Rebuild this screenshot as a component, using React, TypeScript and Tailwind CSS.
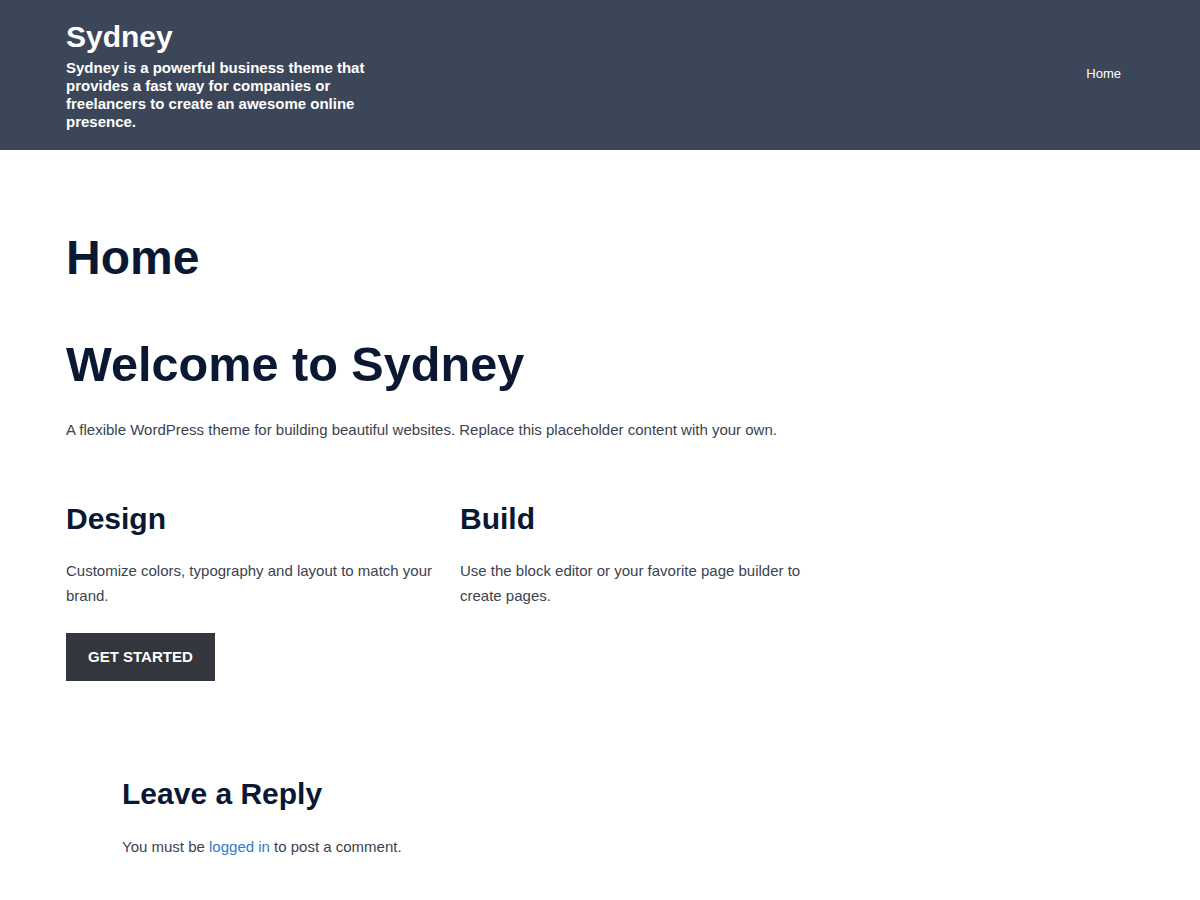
const font = { fontFamily: '"Liberation Sans", Arial, sans-serif' };

export default function App() {
  return (
    <div className="min-h-screen bg-white" style={font}>
      {/* Site header */}
      <header className="h-[150px] bg-[#3c4659]">
        <div className="flex items-start justify-between px-[66px] pt-[19px]">
          <div className="w-[310px]">
            <h1 className="text-[30px] font-bold leading-[36px] text-white">Sydney</h1>
            <p className="mt-[4px] text-[15px] font-bold leading-[18px] text-white">
              Sydney is a powerful business theme that provides a fast way for companies or freelancers to create an awesome online presence.
            </p>
          </div>
          <nav className="mr-[13px] mt-[45px] text-[13px] leading-[20px] text-white">
            <a href="#">Home</a>
          </nav>
        </div>
      </header>

      {/* Page content */}
      <main className="px-[66px]">
        <h1 className="mt-[80px] text-[48px] font-bold leading-[56px] text-[#0b1833]">Home</h1>

        <h2 className="mt-[50px] text-[48.6px] font-bold leading-[56px] text-[#0b1833]">Welcome to Sydney</h2>
        <p className="mt-[25px] text-[15px] leading-[26px] text-[#3b4250]">
          A flexible WordPress theme for building beautiful websites. Replace this placeholder content with your own.
        </p>

        <div className="mt-[58px] grid w-[762px] grid-cols-2 gap-x-[26px]">
          <div>
            <h3 className="text-[30px] font-bold leading-[36px] text-[#0b1833]">Design</h3>
            <p className="mt-[21px] text-[15px] leading-[25px] text-[#3b4250]">
              Customize colors, typography and layout to match your brand.
            </p>
            <button className="mt-[25px] h-[48px] bg-[#33373d] px-[22px] text-[15px] font-bold text-white">
              GET STARTED
            </button>
          </div>
          <div>
            <h3 className="text-[30px] font-bold leading-[36px] text-[#0b1833]">Build</h3>
            <p className="mt-[21px] text-[15px] leading-[25px] text-[#3b4250]">
              Use the block editor or your favorite page builder to create pages.
            </p>
          </div>
        </div>

        {/* Comments */}
        <section className="px-[56px] pb-[40px] pt-[95px]">
          <h2 className="text-[30px] font-bold leading-[36px] text-[#0b1833]">Leave a Reply</h2>
          <p className="mt-[23px] text-[15px] leading-[24px] text-[#3b4250]">
            You must be <a href="#" className="text-[#2f7bd0]">logged in</a> to post a comment.
          </p>
        </section>
      </main>
    </div>
  );
}
